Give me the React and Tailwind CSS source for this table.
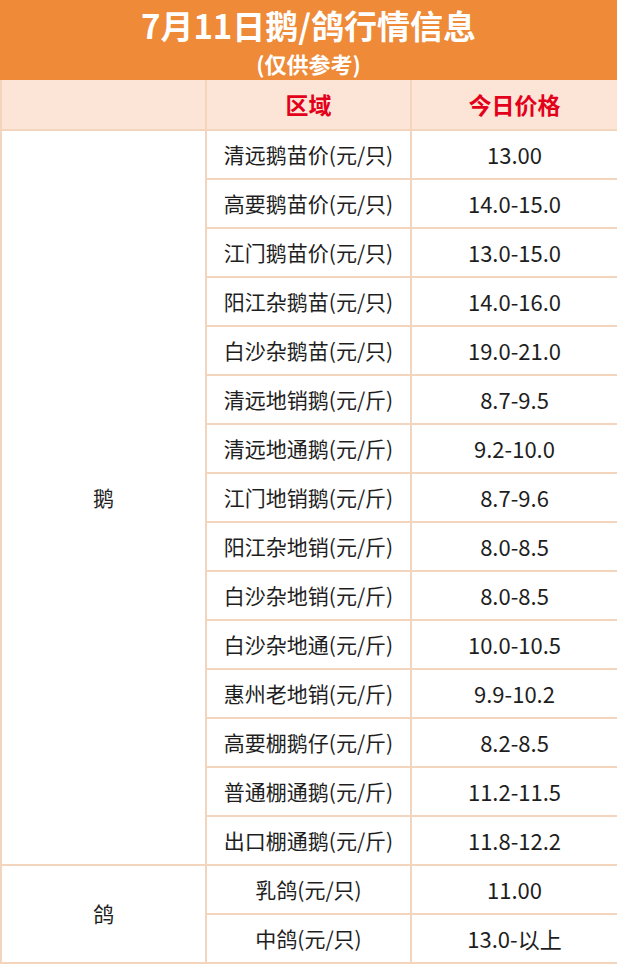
import React from "react";

const goose = [
  ["清远鹅苗价(元/只)", "13.00"],
  ["高要鹅苗价(元/只)", "14.0-15.0"],
  ["江门鹅苗价(元/只)", "13.0-15.0"],
  ["阳江杂鹅苗(元/只)", "14.0-16.0"],
  ["白沙杂鹅苗(元/只)", "19.0-21.0"],
  ["清远地销鹅(元/斤)", "8.7-9.5"],
  ["清远地通鹅(元/斤)", "9.2-10.0"],
  ["江门地销鹅(元/斤)", "8.7-9.6"],
  ["阳江杂地销(元/斤)", "8.0-8.5"],
  ["白沙杂地销(元/斤)", "8.0-8.5"],
  ["白沙杂地通(元/斤)", "10.0-10.5"],
  ["惠州老地销(元/斤)", "9.9-10.2"],
  ["高要棚鹅仔(元/斤)", "8.2-8.5"],
  ["普通棚通鹅(元/斤)", "11.2-11.5"],
  ["出口棚通鹅(元/斤)", "11.8-12.2"],
];

const pigeon = [
  ["乳鸽(元/只)", "11.00"],
  ["中鸽(元/只)", "13.0-以上"],
];

const cell = "border-2 border-[#f3d4bd] text-center align-middle";

export default function App() {
  return (
    <div className="w-[617px] bg-white font-['Microsoft_YaHei','Noto_Sans_CJK_SC',sans-serif] text-[#1e1e1e]">
      <div className="h-[80px] bg-[#ee8a38] text-white flex flex-col items-center pt-[3px]">
        <div className="text-[33px] font-bold leading-[44px]">7月11日鹅/鸽行情信息</div>
        <div className="mt-[2px] text-[22px] font-bold leading-[28px]">(仅供参考)</div>
      </div>
      <table className="w-[617px] border-collapse table-fixed">
        <colgroup>
          <col className="w-[205px]" />
          <col className="w-[205px]" />
          <col className="w-[207px]" />
        </colgroup>
        <thead>
          <tr className="h-[50px] bg-[#fce5d6] text-[#e3001b] text-[23px] font-bold">
            <th className={`${cell} border-t-0`}></th>
            <th className={`${cell} border-t-0`}>区域</th>
            <th className={`${cell} border-t-0`}>今日价格</th>
          </tr>
        </thead>
        <tbody className="text-[21px]">
          {goose.map(([name, price], i) => (
            <tr key={name} className="h-[49px]">
              {i === 0 && (
                <td rowSpan={goose.length} className={cell}>鹅</td>
              )}
              <td className={cell}>{name}</td>
              <td className={`${cell} text-[22px]`}>{price}</td>
            </tr>
          ))}
          {pigeon.map(([name, price], i) => (
            <tr key={name} className="h-[49px]">
              {i === 0 && (
                <td rowSpan={pigeon.length} className={cell}>鸽</td>
              )}
              <td className={cell}>{name}</td>
              <td className={`${cell} text-[22px]`}>{price}</td>
            </tr>
          ))}
        </tbody>
      </table>
    </div>
  );
}
